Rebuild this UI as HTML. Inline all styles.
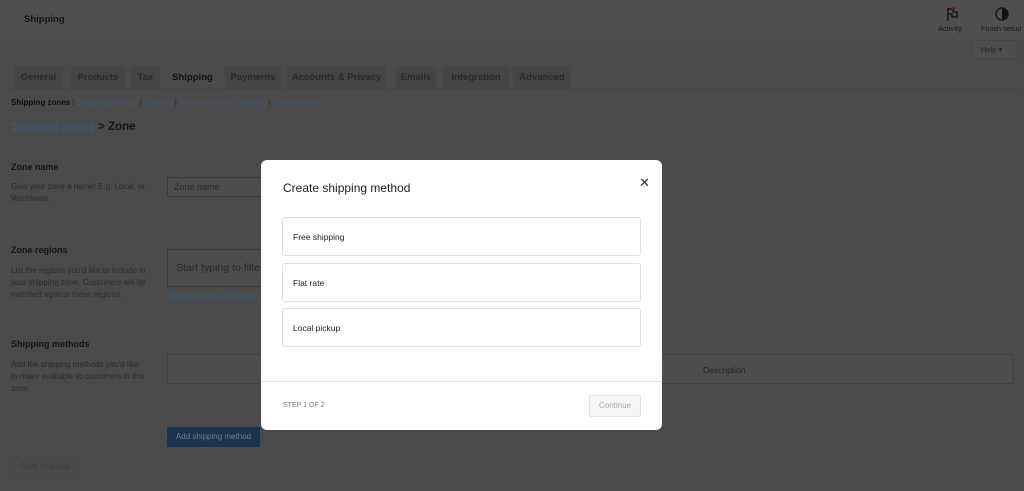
<!DOCTYPE html>
<html><head><meta charset="utf-8"><style>
*{box-sizing:border-box;margin:0;padding:0}
body{width:1024px;height:491px;overflow:hidden;background:#4a4a4a;font-family:"Liberation Sans",sans-serif;position:relative;color:#111}
.a{position:absolute}
.hdr{left:0;top:0;width:1024px;height:40px;background:#4f4f4f}
.tab{position:absolute;top:66px;height:23px;background:#454545;font-size:9.5px;font-weight:bold;color:#2a2a2a;line-height:23px;text-align:center}
.t{font-size:8px;color:#2b2b2b;line-height:12px}
.h{font-size:9px;font-weight:bold;color:#151515}
.inp{border:1px solid #3a3a3a;background:#4c4c4c}
.lnk{color:#3a5876}
.modal{left:261px;top:160px;width:401px;height:270px;background:#fff;border-radius:6px}
.opt{position:absolute;left:21px;width:359px;height:39px;border:1px solid #e0e0e0;border-radius:3px;font-size:8.5px;color:#222;line-height:39px;padding-left:10px}
</style></head><body>
<div class="a hdr"></div>
<div class="a" style="left:24px;top:14px;font-size:9.5px;font-weight:bold;color:#151515">Shipping</div>
<svg class="a" style="left:944px;top:6px" width="16" height="16" viewBox="0 0 16 16"><path d="M4 2v13M4 3h5v3h4v5H8V8H4" fill="none" stroke="#111" stroke-width="1.3"/><circle cx="10" cy="2.5" r="1.5" fill="#6a1a1a"/></svg>
<div class="a" style="left:938px;top:24px;font-size:7.5px;color:#1a1a1a">Activity</div>
<svg class="a" style="left:995px;top:7px" width="14" height="14" viewBox="0 0 14 14"><circle cx="7" cy="7" r="6" fill="none" stroke="#111" stroke-width="1.3"/><path d="M7 1a6 6 0 0 1 0 12z" fill="#111"/></svg>
<div class="a" style="left:981px;top:24px;font-size:7.5px;color:#1a1a1a;white-space:nowrap">Finish setup</div>
<div class="a" style="left:971px;top:40px;width:47px;height:19px;background:#4d4d4d;border:1px solid #454545;font-size:7.5px;color:#222;line-height:17px;padding-left:9px">Help ▾</div>
<div class="tab" style="left:14px;width:49px">General</div>
<div class="tab" style="left:71px;width:54px">Products</div>
<div class="tab" style="left:131px;width:29px">Tax</div>
<div class="tab" style="left:166px;width:53px;background:#4a4a4a;color:#111">Shipping</div>
<div class="tab" style="left:225px;width:56px">Payments</div>
<div class="tab" style="left:287px;width:99px">Accounts &amp; Privacy</div>
<div class="tab" style="left:396px;width:40px">Emails</div>
<div class="tab" style="left:443px;width:66px">Integration</div>
<div class="tab" style="left:513px;width:58px">Advanced</div>
<div class="a" style="left:10px;top:89px;width:1010px;height:1px;background:#424242"></div>
<div class="a t" style="left:11px;top:97px;white-space:nowrap"><b style="color:#111">Shipping zones</b> | <span class="lnk">Shipping settings</span> | <span class="lnk">Classes</span> | <span class="lnk">Advanced Free Shipping</span> | <span class="lnk">Local pickup</span></div>
<div class="a" style="left:10px;top:121px;font-size:11.5px;font-weight:bold;color:#151515"><span style="color:#3a5876;text-decoration:underline">Shipping zones</span> &gt; Zone</div>
<div class="a h" style="left:11px;top:162px">Zone name</div>
<div class="a t" style="left:11px;top:181px;width:135px">Give your zone a name! E.g. Local, or Worldwide.</div>
<div class="a inp" style="left:167px;top:177px;width:110px;height:20px;font-size:9px;color:#2a2a2a;padding:4px 6px">Zone name</div>
<div class="a h" style="left:11px;top:245px">Zone regions</div>
<div class="a t" style="left:11px;top:265px;width:140px">List the regions you'd like to include in your shipping zone. Customers will be matched against these regions.</div>
<div class="a inp" style="left:167px;top:249px;width:110px;height:38px;font-size:10.5px;color:#2a2a2a;padding:12px 8px;white-space:nowrap;overflow:hidden">Start typing to filter</div>
<div class="a t lnk" style="left:167px;top:290px;text-decoration:underline">Limit to specific ZIP/postcodes</div>
<div class="a h" style="left:11px;top:339px">Shipping methods</div>
<div class="a t" style="left:11px;top:359px;width:135px">Add the shipping methods you'd like to make available to customers in this zone.</div>
<div class="a" style="left:167px;top:354px;width:846px;height:30px;background:#4d4d4d;border:1px solid #404040;font-size:8.5px;color:#222;line-height:30px;padding-left:535px">Description</div>
<div class="a" style="left:167px;top:427px;width:93px;height:20px;background:#1a3450;font-size:8px;color:#6c7f92;line-height:20px;text-align:center">Add shipping method</div>
<div class="a" style="left:11px;top:457px;width:68px;height:20px;border:1px solid #474747;font-size:8px;color:#3c3c3c;line-height:18px;text-align:center">Save changes</div>

<div class="a modal">
<div class="a" style="left:22px;top:21px;font-size:12px;color:#1e1e1e">Create shipping method</div>
<div class="a" style="left:378px;top:15px;font-size:13px;color:#333">✕</div>
<div class="opt" style="top:57px">Free shipping</div>
<div class="opt" style="top:103px">Flat rate</div>
<div class="opt" style="top:148px">Local pickup</div>
<div class="a" style="left:0;top:221px;width:401px;height:1px;background:#e4e4e4"></div>
<div class="a" style="left:22px;top:242px;font-size:7px;color:#777">STEP 1 OF 2</div>
<div class="a" style="left:328px;top:235px;width:52px;height:22px;border:1px solid #e2e2e2;background:#f6f6f6;border-radius:2px;font-size:8px;color:#aaa;line-height:20px;text-align:center">Continue</div>
</div>
</body></html>
